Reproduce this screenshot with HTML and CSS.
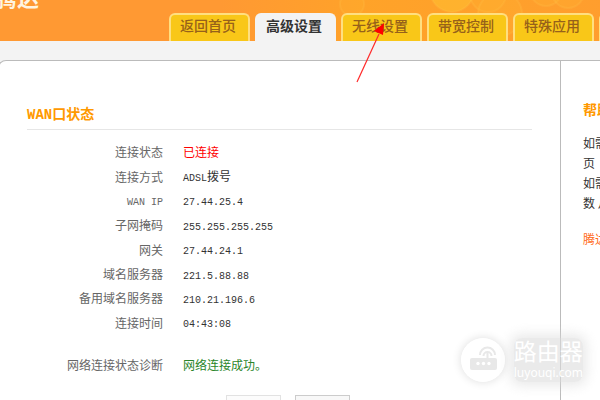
FILE: index.html
```html
<!DOCTYPE html>
<html lang="zh-CN">
<head>
<meta charset="utf-8">
<title>腾达 - 高级设置</title>
<link rel="stylesheet" href="styles.css">
</head>
<body>
<header class="header">
  <svg class="bubbles" width="380" height="41" viewBox="0 0 380 41" aria-hidden="true">
    <defs><linearGradient id="glow"><stop offset="0" stop-color="#ffa526" stop-opacity="0"/><stop offset=".4" stop-color="#ffa526" stop-opacity=".8"/><stop offset="1" stop-color="#ffa526" stop-opacity=".4"/></linearGradient></defs>
    <rect width="380" height="41" fill="url(#glow)"/>
    <g fill="#ffbe30" fill-opacity=".2" stroke="#ffc84e" stroke-opacity=".2" stroke-width="2">
      <circle cx="132" cy="4" r="12"/><circle cx="232" cy="-10" r="22" fill-opacity=".6"/><circle cx="268" cy="-6" r="18"/><circle cx="280" cy="14" r="22"/><circle cx="326" cy="-10" r="16"/><circle cx="348" cy="-8" r="16"/>
    </g>
  </svg>
  <div class="brand">腾达</div>
  <nav class="tabs">
    <a class="tab" href="#home">返回首页</a>
    <a class="tab active" href="#advanced">高级设置</a>
    <a class="tab" href="#wireless">无线设置</a>
    <a class="tab" href="#bandwidth">带宽控制</a>
    <a class="tab" href="#special">特殊应用</a>
    <span class="tab"></span>
  </nav>
</header>
<div class="panel">
  <main class="status">
    <h1 class="title">WAN口状态</h1>
    <table class="info rows">
      <tr><th scope="row">连接状态</th><td class="bad">已连接</td></tr>
      <tr><th scope="row">连接方式</th><td><span class="latin">ADSL</span>拨号</td></tr>
      <tr><th scope="row"><span class="latin">WAN IP</span></th><td><span class="latin">27.44.25.4</span></td></tr>
      <tr><th scope="row">子网掩码</th><td><span class="latin">255.255.255.255</span></td></tr>
      <tr><th scope="row">网关</th><td><span class="latin">27.44.24.1</span></td></tr>
      <tr><th scope="row">域名服务器</th><td><span class="latin">221.5.88.88</span></td></tr>
      <tr><th scope="row">备用域名服务器</th><td><span class="latin">210.21.196.6</span></td></tr>
      <tr><th scope="row">连接时间</th><td><span class="latin">04:43:08</span></td></tr>
    </table>
    <table class="info diagnosis">
      <tr><th scope="row">网络连接状态诊断</th><td class="good">网络连接成功。</td></tr>
    </table>
    <div class="actions">
      <button class="button" type="button" disabled>连接</button>
      <button class="button" type="button">断开</button>
    </div>
  </main>
  <aside class="help">
    <h2 class="help-title">帮助</h2>
    <p class="help-text">如需<br>页<br>如需<br>数 从</p>
    <a class="help-link" href="#tenda">腾达</a>
  </aside>
</div>
<svg class="arrow" width="34" height="62" viewBox="0 0 34 62" aria-hidden="true">
  <path d="M4 60 26 12" stroke="#ff2a2a" stroke-width="1.2" fill="none"/>
  <path d="M31 1 21 9 30 13Z" fill="#f00"/>
</svg>
<div class="watermark">
  <svg class="router" width="44" height="44" viewBox="0 0 44 44" aria-hidden="true">
    <circle cx="22" cy="22" r="22" fill="#fff"/>
    <rect x="9" y="20" width="27" height="12" rx="2" fill="#e8e8e8"/>
    <path d="M26.500 15v6" stroke="#e8e8e8" stroke-width="2"/>
    <g fill="#fff"><circle cx="17" cy="25.500" r="1.700"/><circle cx="22.500" cy="25.500" r="1.700"/><circle cx="28" cy="25.500" r="1.700"/></g>
    <g fill="none" stroke="#e8e8e8" stroke-width="2"><path d="M19 17a7.500 7.500 0 0 1 15 0"/><path d="M22.500 18a4 4 0 0 1 8 0"/></g>
  </svg>
  <div class="mark-text"><span class="mark-name">路由器</span><span class="mark-site">luyouqi.com</span></div>
</div>
</body>
</html>
```
FILE: styles.css
```css
* { box-sizing: border-box; }
body {
  margin: 0;
  height: 100vh;
  overflow: hidden;
  position: relative;
  display: flex;
  flex-direction: column;
  background: #f3f3f3;
  color: #333;
  font: 12px/20px "Liberation Mono", "Noto Sans CJK SC", monospace;
}
.header {
  position: relative;
  display: flex;
  flex: 0 0 41px;
  align-items: flex-end;
  overflow: hidden;
  background: #ff9933;
  font-family: "Noto Sans CJK SC", sans-serif;
}
.bubbles { position: absolute; top: 0; right: 0; }
.brand {
  flex: 0 0 169px;
  align-self: flex-start;
  margin-top: -20px;
  text-indent: -5px;
  color: #fff4e0;
  font-size: 22px;
  font-weight: 700;
  line-height: 32px;
}
.tabs { position: relative; display: flex; gap: 5px; }
.tab {
  flex: 0 0 81px;
  height: 28px;
  padding-right: 3px;
  border: 2px solid #ffdf80;
  border-bottom: 0;
  border-radius: 6px 6px 0 0;
  background: #f9c718;
  color: #96611a;
  font-size: 14px;
  font-weight: 500;
  line-height: 20px;
  text-align: center;
  text-decoration: none;
}
.tab.active { border-color: #f3f3f3; background: #f3f3f3; color: #333; font-weight: 700; }
.panel {
  flex: 1 0 auto;
  display: grid;
  grid-template-columns: minmax(0, 1fr) 40px;
  margin: 19px 0 0 -2px;
  border: 1px solid #bbb;
  border-width: 1px 0 0 1px;
  border-radius: 8px 0 0 0;
  background: #fff;
}
.status { padding: 44px 28px 0; }
.title {
  margin: 0 0 12px;
  padding-bottom: 4px;
  border-bottom: 1px solid #e6e6e6;
  color: #ff9900;
  font-size: 14px;
  line-height: 20px;
}
.info { width: 100%; border-collapse: collapse; table-layout: fixed; }
.rows { height: 195px; }
.info th, .info td { height: 24px; padding: 0; line-height: 20px; }
.info th { width: 136px; color: #666; font-weight: 400; text-align: right; }
.info td { padding-left: 20px; }
.latin { font-size: 10px; }
.info .bad { color: #f00; }
.info .good { color: #2a862a; }
.diagnosis { margin-top: 18px; }
.actions { display: flex; gap: 14px; padding: 16px 0 0 199px; }
.button {
  width: 55px;
  height: 28px;
  border: 1px solid #ccc;
  background: #f8f8f8;
  color: #333;
  font: inherit;
}
.button:disabled { border-color: #e2e2e2; background: #fcfcfc; color: #aaa; }
.help {
  padding: 38px 0 0 22px;
  overflow: hidden;
  border-left: 1px solid #bbb;
  font-family: "Noto Sans CJK SC", sans-serif;
  white-space: nowrap;
}
.help-title { margin: 0 0 14px; color: #ff9900; font-size: 14px; line-height: 20px; }
.help-text { margin: 0 0 16px; }
.help-link { color: #ff6a1a; text-decoration: none; }
.arrow { position: absolute; left: 353px; top: 22px; }
.watermark {
  position: absolute;
  right: 17px;
  bottom: 18px;
  display: flex;
  align-items: center;
  gap: 9px;
  color: #fff;
  font-family: "Noto Sans", "Noto Sans CJK SC", sans-serif;
}
.router { border-radius: 50%; box-shadow: 0 0 10px #ddd; }
.mark-text {
  display: flex;
  flex-direction: column;
  border-radius: 8px;
  background: rgba(220, 220, 220, 0.6);
  box-shadow: 0 0 12px 4px rgba(220, 220, 220, 0.6);
}
.mark-name { font-size: 23px; line-height: 26px; }
.mark-site { font-size: 12px; line-height: 18px; }
```
